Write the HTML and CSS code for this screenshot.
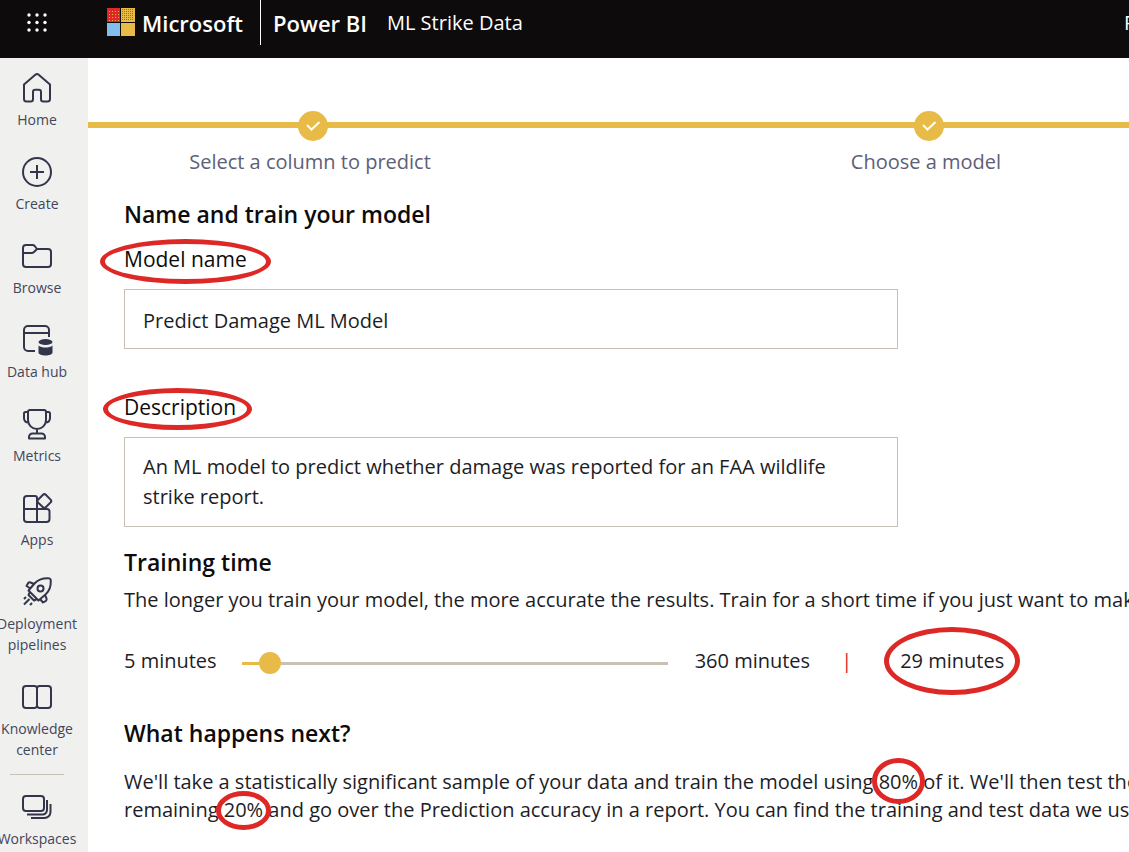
FILE: index.html
```html
<!DOCTYPE html>
<html lang="en">
<head>
<meta charset="utf-8">
<title>Power BI - ML Strike Data</title>
<link rel="stylesheet" href="styles.css">
</head>
<body>
<header class="topbar">
  <button class="launcher" type="button" aria-label="App launcher">
    <svg width="20" height="20" viewBox="0 0 20 20" fill="#fff"><circle cx="2" cy="2" r="1.7"/><circle cx="10" cy="2" r="1.7"/><circle cx="18" cy="2" r="1.7"/><circle cx="2" cy="9.500" r="1.7"/><circle cx="10" cy="9.500" r="1.7"/><circle cx="18" cy="9.500" r="1.7"/><circle cx="2" cy="17" r="1.7"/><circle cx="10" cy="17" r="1.7"/><circle cx="18" cy="17" r="1.7"/></svg>
  </button>
  <div class="brand">
    <svg width="29" height="29" viewBox="0 0 29 29">
      <rect x="1" y="0" width="13" height="14" fill="#dd2826"/>
      <path d="M3 3.500h10M3 6.500h10M3 9.500h10M3 12.500h10" stroke="#e8ba48" stroke-dasharray="1 2"/>
      <rect x="15" y="0" width="14" height="14" fill="#e8ba48"/>
      <path d="M16 1.500h12M16 3.500h12M16 5.500h12M16 7.500h12M16 9.500h12M16 11.500h12" stroke="#85744d" stroke-dasharray="1 1"/>
      <rect x="1" y="15" width="13" height="13" fill="#83bdec"/>
      <rect x="15" y="15" width="14" height="13" fill="#e8ba48"/>
    </svg>
    <span class="brand-name">Microsoft</span>
  </div>
  <a class="product" href="#">Power BI</a>
  <span class="workspace">ML Strike Data</span>
  <span class="trial">P</span>
</header>
<div class="layout">
  <nav class="rail" aria-label="Main">
    <a class="rail-item" href="#"><svg class="icon" viewBox="0 0 30 30"><path d="M2 11.500 13.300 1.800a2.600 2.600 0 0 1 3.400 0L28 11.500V26a2.600 2.600 0 0 1-2.600 2.600h-4.100A2.300 2.300 0 0 1 19 26.300V19a2.200 2.200 0 0 0-2.200-2.200h-3.600A2.200 2.200 0 0 0 11 19v7.300a2.300 2.300 0 0 1-2.300 2.300H4.600A2.600 2.600 0 0 1 2 26Z"/></svg><span>Home</span></a>
    <a class="rail-item" href="#"><svg class="icon" viewBox="0 0 30 30"><circle cx="15" cy="15" r="14"/><path d="M15 8v14M8 15h14"/></svg><span>Create</span></a>
    <a class="rail-item" href="#"><svg class="icon" viewBox="0 0 30 30"><path d="M1 7a3 3 0 0 1 3-3h6.500a3 3 0 0 1 2.200 1l2.300 3H26a3 3 0 0 1 3 3v12a3 3 0 0 1-3 3H4a3 3 0 0 1-3-3ZM1 12h8.500a4 4 0 0 0 2.500-1l3-3"/></svg><span>Browse</span></a>
    <a class="rail-item" href="#"><svg class="icon" viewBox="0 0 30 30"><path d="M13 26H6a4 4 0 0 1-4-4V5a4 4 0 0 1 4-4h17a4 4 0 0 1 4 4v7M2 8h25"/><ellipse class="solid" cx="23.500" cy="17" rx="7" ry="3"/><path class="solid" d="M16.500 20.500c3 2.700 11 2.700 14 0v7c0 4-14 4-14 0Z"/></svg><span>Data hub</span></a>
    <a class="rail-item" href="#"><svg class="icon" viewBox="0 0 30 30"><path d="M8 1h14a2 2 0 0 1 2 2v8c0 5-4 9-9 9s-9-4-9-9V3a2 2 0 0 1 2-2ZM6 3H3.500A1.500 1.500 0 0 0 2 4.500V9c0 3 2 4.500 5 4.500M24 3h2.500A1.500 1.500 0 0 1 28 4.500V9c0 3-2 4.500-5 4.500M15 20v5M7 29.500V28a3.500 3.500 0 0 1 3.500-3.500h9A3.500 3.500 0 0 1 23 28v1.500Z"/></svg><span>Metrics</span></a>
    <a class="rail-item" href="#"><svg class="icon" viewBox="0 0 30 30"><path d="M5 3h8a2 2 0 0 1 2 2v11H2V6a3 3 0 0 1 3-3ZM2 16h13v13H5a3 3 0 0 1-3-3ZM15 16h10a2.500 2.500 0 0 1 2.500 2.500V26a3 3 0 0 1-3 3H15Z"/><path d="m16 6.800 5-5a2 2 0 0 1 2.800 0l4.800 4.800a2 2 0 0 1 0 2.800l-4.800 4.800a2 2 0 0 1-2.800 0L16 9.600a2 2 0 0 1 0-2.800Z"/></svg><span>Apps</span></a>
    <a class="rail-item" href="#"><svg class="icon" viewBox="0 0 30 30"><path d="M12.500 6.500C16 2.500 21 1 26.500 1.200A2.300 2.300 0 0 1 28.800 3.500C29 9 27.500 14 23.500 17.500L16.500 23.500 6.500 13.500Z"/><circle cx="18.500" cy="11.500" r="3"/><path d="M12 7 8.500 5.500a2 2 0 0 0-2.300.5L4.500 9l4 2.500M23 18l1.500 3.500a2 2 0 0 1-.5 2.300L21 25.500l-3-3.500M8 15l-1.500 3 5.500 5.500 3-1.500M2 22l2-2M2 27.500l5.500-5.500M8 28l2-2"/></svg><span>Deployment pipelines</span></a>
    <a class="rail-item" href="#"><svg class="icon" viewBox="0 0 30 30"><path d="M4 4h8.500A2.500 2.500 0 0 1 15 6.500v17a2.500 2.500 0 0 1-2.500 2.500H4a3 3 0 0 1-3-3V7a3 3 0 0 1 3-3ZM26 4h-8.500A2.500 2.500 0 0 0 15 6.500v17a2.500 2.500 0 0 0 2.500 2.500H26a3 3 0 0 0 3-3V7a3 3 0 0 0-3-3Z"/></svg><span>Knowledge center</span></a>
    <hr class="rail-rule">
    <a class="rail-item" href="#"><svg class="icon" viewBox="0 0 30 30"><rect x="1" y="4" width="21" height="15" rx="3"/><path d="M25 8v10a4.500 4.500 0 0 1-4.500 4.500H5M28.500 12v8a6 6 0 0 1-6 6H9"/></svg><span>Workspaces</span></a>
  </nav>
  <main class="content">
    <ol class="steps">
      <li class="step"><svg class="step-dot" viewBox="0 0 30 30"><circle cx="15" cy="15" r="15"/><path d="m9 14 4.500 4.500 8-7.500"/></svg><span class="step-label">Select a column to predict</span></li>
      <li class="step"><svg class="step-dot" viewBox="0 0 30 30"><circle cx="15" cy="15" r="15"/><path d="m9 14 4.500 4.500 8-7.500"/></svg><span class="step-label">Choose a model</span></li>
    </ol>
    <form class="form">
      <h1 class="heading">Name and train your model</h1>
      <label class="label" for="model-name"><span class="mark mark-name">Model name</span></label>
      <input class="field" id="model-name" type="text" value="Predict Damage ML Model">
      <label class="label label-next" for="description"><span class="mark mark-description">Description</span></label>
      <textarea class="field field-area" id="description">An ML model to predict whether damage was reported for an FAA wildlife strike report.</textarea>
      <h2 class="heading">Training time</h2>
      <p class="text">The longer you train your model, the more accurate the results. Train for a short time if you just want to make</p>
      <div class="time">
        <label for="minutes">5 minutes</label>
        <input class="slider" id="minutes" type="range" min="5" max="360" value="29">
        <span>360 minutes</span>
        <span class="bar">|</span>
        <output class="mark mark-time" for="minutes">29 minutes</output>
      </div>
      <h2 class="heading">What happens next?</h2>
      <p class="text text-last">We'll take a statistically significant sample of your data and train the model using <span class="mark mark-train">80%</span> of it. We'll then test the<br>remaining <span class="mark mark-test">20%</span> and go over the Prediction accuracy in a report. You can find the training and test data we use</p>
    </form>
  </main>
</div>
</body>
</html>
```
FILE: styles.css
```css
* { box-sizing: border-box; }
body {
  margin: 0;
  min-height: 100vh;
  display: flex;
  flex-direction: column;
  overflow: hidden;
  background: #fff;
  color: #1d1d26;
  font-family: "Open Sans", "Noto Sans", sans-serif;
  font-size: 20px;
}
a { color: inherit; text-decoration: none; }

.topbar {
  display: flex;
  align-items: flex-start;
  height: 58px;
  background: #0d0b0c;
  color: #fff;
  white-space: nowrap;
  line-height: 46px;
}
.launcher {
  width: 74px;
  height: 45px;
  padding: 0;
  border: 0;
  background: none;
}
.launcher svg { display: block; margin: 0 auto; }
.brand {
  display: flex;
  align-items: center;
  gap: 7px;
  height: 45px;
  width: 187px;
  padding-left: 32px;
  border-right: 1px solid #fff;
}
.brand-name { font-size: 22px; font-weight: 600; }
.product { margin-left: 12px; font-size: 22px; font-weight: 600; }
.workspace { margin-left: 20px; }
.trial { margin-left: auto; width: 5px; overflow: hidden; }

.layout { display: flex; flex: 1; }
.rail {
  flex: none;
  width: 88px;
  padding-right: 14px;
  background: #f0f0ee;
  color: #42465c;
  font-size: 14px;
  line-height: 21px;
  text-align: center;
}
.rail-item {
  display: flex;
  flex-direction: column;
  align-items: center;
  gap: 6px;
  padding: 15px 0 12px;
}
.icon {
  width: 30px;
  height: 30px;
  overflow: visible;
  fill: none;
  stroke: #33364b;
  stroke-width: 2;
  stroke-linejoin: round;
}
.icon .solid { fill: #33364b; stroke: none; }
.rail-rule {
  width: 54px;
  margin: 2px auto;
  border: 0;
  border-top: 1px solid #c8c1b6;
}

.content { flex: 1; min-width: 0; overflow: hidden; }
.steps {
  display: grid;
  grid-template-columns: 1fr 1fr;
  width: calc(100% + 191px);
  margin: 53px 0 0 -83px;
  padding: 0;
  list-style: none;
  color: #5d6076;
  background: linear-gradient(#e8ba48, #e8ba48) 0 11px / 100% 6px no-repeat;
}
.step { display: flex; flex-direction: column; align-items: center; }
.step-dot { width: 30px; height: 30px; fill: #e8ba48; }
.step-dot path { fill: none; stroke: #fff; stroke-width: 2; }
.step-label { padding-right: 6px; line-height: 42px; }

.form { padding: 0 36px; }
.heading { margin: 17px 0 0; font-size: 23px; line-height: 36px; font-weight: 600; color: #0d0b0c; }
.steps + .form .heading:first-child { margin-top: 13px; }
.label { display: block; margin-top: 12px; font-size: 21px; line-height: 30px; font-weight: 500; color: #0d0b0c; }
.label-next { margin-top: 43px; }
.field {
  display: block;
  width: 100%;
  max-width: 774px;
  height: 60px;
  margin-top: 15px;
  padding: 15px 18px 13px;
  border: 1px solid #c8c1b6;
  border-radius: 0;
  background: #fff;
  color: inherit;
  font: inherit;
  line-height: 30px;
  resize: none;
}
.field-area { height: 90px; padding-top: 14px; overflow: hidden; }
.text { margin: 6px 0 0; line-height: 28px; white-space: nowrap; }
.text-last { margin-top: 17px; }
.time {
  display: flex;
  align-items: center;
  margin: 32px 0 39px;
  line-height: 30px;
  white-space: nowrap;
}
.slider {
  appearance: none;
  flex: 0 1 448px;
  min-width: 100px;
  height: 22px;
  margin: 4px 16px 0 14px;
  background: linear-gradient(90deg, #e8ba48 29px, #c8c1b6 29px) center / calc(100% - 22px) 3px no-repeat;
}
.slider::-webkit-slider-thumb {
  appearance: none;
  width: 22px;
  height: 22px;
  border-radius: 50%;
  background: #e8ba48;
}
.bar { margin: 0 48px 0 31px; color: #dd2826; }

/* Red rings around the terms being explained */
.mark { position: relative; }
.mark::after {
  content: "";
  position: absolute;
  border: 5px solid #dd2826;
  border-radius: 50%;
}
.mark-name::after { inset: -6px -24px -11px; }
.mark-description::after { inset: -5px -16px -9px -21px; }
.mark-time::after { inset: -19px -16px; }
.mark-train::after { inset: -10px -7px -9px; }
.mark-test::after { inset: -5px -8px -7px; }
```
